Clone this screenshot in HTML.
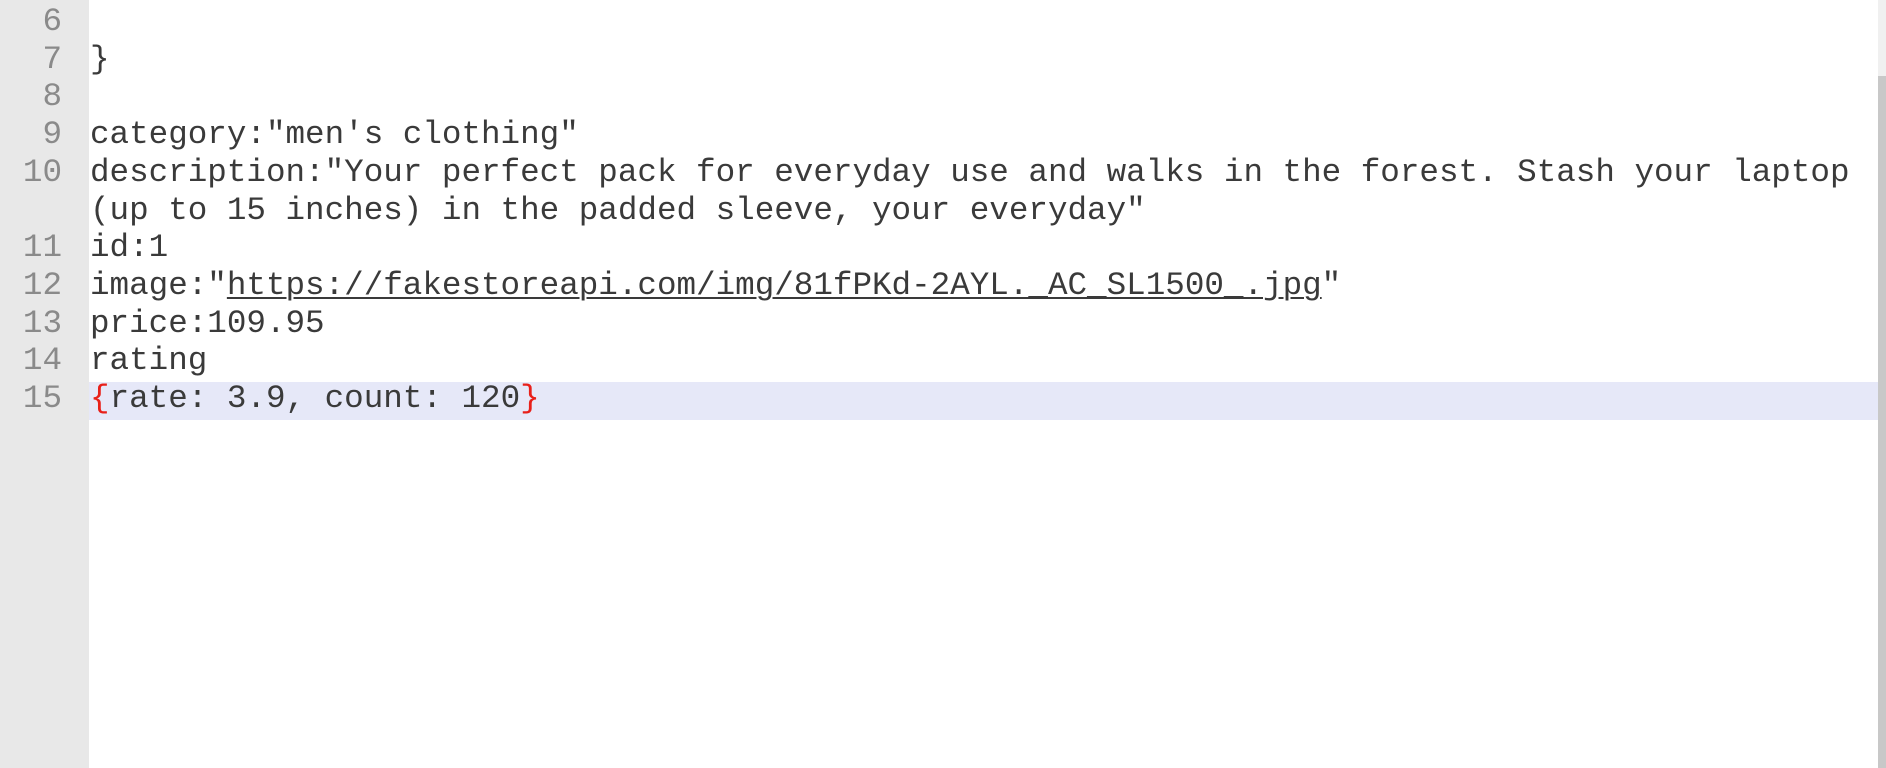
<!DOCTYPE html>
<html><head><meta charset="utf-8"><style>
html,body{margin:0;padding:0;width:1886px;height:768px;overflow:hidden;background:#fff}
.g{position:absolute;left:0;top:0;width:89px;height:768px;background:#e8e8e8}
.sb{position:absolute;left:1878px;top:0;width:8px;height:768px;background:#c8c8c8}
.sbt{position:absolute;left:1878px;top:0;width:8px;height:76px;background:#f0f0f0}
.hl{position:absolute;left:89px;top:382px;width:1789px;height:38px;background:#e6e8f8}
.r{position:absolute;left:0;height:37.7px;line-height:37.7px;font-family:"Liberation Mono",monospace;font-size:32.6px;color:#3a3a3a;white-space:pre}
.n{position:absolute;left:0;width:62px;text-align:right;color:#8a8a8a}
.t{position:absolute;left:90px}
.red{color:#e8201a}
u{text-decoration-thickness:2px;text-underline-offset:3px}
</style></head><body>
<div class="g"></div><div class="hl"></div><div class="sb"></div><div class="sbt"></div>
<div class="r" style="top:3px"><span class="n">6</span></div>
<div class="r" style="top:40.7px"><span class="n">7</span><span class="t">}</span></div>
<div class="r" style="top:78.4px"><span class="n">8</span></div>
<div class="r" style="top:116.1px"><span class="n">9</span><span class="t">category:"men's clothing"</span></div>
<div class="r" style="top:153.8px"><span class="n">10</span><span class="t">description:"Your perfect pack for everyday use and walks in the forest. Stash your laptop</span></div>
<div class="r" style="top:191.5px"><span class="t">(up to 15 inches) in the padded sleeve, your everyday"</span></div>
<div class="r" style="top:229.2px"><span class="n">11</span><span class="t">id:1</span></div>
<div class="r" style="top:266.9px"><span class="n">12</span><span class="t">image:"<u>https://fakestoreapi.com/img/81fPKd-2AYL._AC_SL1500_.jpg</u>"</span></div>
<div class="r" style="top:304.6px"><span class="n">13</span><span class="t">price:109.95</span></div>
<div class="r" style="top:342.3px"><span class="n">14</span><span class="t">rating</span></div>
<div class="r" style="top:380px"><span class="n">15</span><span class="t"><span class="red">{</span>rate: 3.9, count: 120<span class="red">}</span></span></div>
</body></html>
